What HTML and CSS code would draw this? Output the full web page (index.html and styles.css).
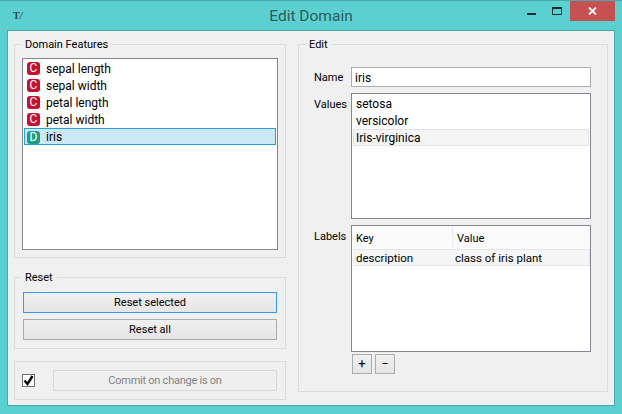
FILE: index.html
```html
<!DOCTYPE html>
<html lang="en">
<head>
    <meta charset="UTF-8">
    <meta name="viewport" content="width=device-width, initial-scale=1.0">
    <title>Edit Domain</title>
    <link rel="stylesheet" href="styles.css">
</head>
<body>
    <div class="window">
        <div class="titlebar">
            <span class="app-icon">T<i>/</i></span>
            <span class="title">Edit Domain</span>
            <div class="controls">
                <span class="ctl ctl-min"><svg width="9" height="3"><rect width="9" height="2" y="1" fill="#1c2b2b"/></svg></span>
                <span class="ctl ctl-max"><svg width="10" height="8"><path d="M.5 1.5h9v6h-9z" fill="none" stroke="#1c2b2b"/><rect width="10" height="2" fill="#1c2b2b"/></svg></span>
                <span class="ctl ctl-close"><svg width="9" height="8"><path d="M1 .5l7 7M8 .5l-7 7" fill="none" stroke="#fff" stroke-width="1.8"/></svg></span>
            </div>
        </div>
        <div class="client">
            <div class="left">
                <fieldset class="group features">
                    <legend>Domain Features</legend>
                    <ul class="list var-list">
                        <li><span class="badge cont">C</span>sepal length</li>
                        <li><span class="badge cont">C</span>sepal width</li>
                        <li><span class="badge cont">C</span>petal length</li>
                        <li><span class="badge cont">C</span>petal width</li>
                        <li class="selected"><span class="badge disc">D</span>iris</li>
                    </ul>
                </fieldset>
                <fieldset class="group reset">
                    <legend>Reset</legend>
                    <button class="btn focused">Reset selected</button>
                    <button class="btn">Reset all</button>
                </fieldset>
                <div class="group commit">
                    <span class="check"><svg width="11" height="11"><path d="M1.5 5.5l3 3.5 5-8" fill="none" stroke="#000" stroke-width="2.4"/></svg></span>
                    <button class="btn disabled">Commit on change is on</button>
                </div>
            </div>
            <fieldset class="group edit">
                <legend>Edit</legend>
                <div class="form">
                    <label class="lbl lbl-name">Name</label>
                    <input class="name-input" type="text" value="iris">
                    <label class="lbl">Values</label>
                    <ul class="list values">
                        <li>setosa</li>
                        <li>versicolor</li>
                        <li class="current">Iris-virginica</li>
                    </ul>
                    <label class="lbl">Labels</label>
                    <div class="labels-cell">
                        <div class="list table">
                            <div class="thead">
                                <span class="col-key">Key</span>
                                <span class="col-value">Value</span>
                            </div>
                            <div class="trow">
                                <span class="col-key">description</span>
                                <span class="col-value">class of iris plant</span>
                            </div>
                        </div>
                        <div class="tools">
                            <button class="btn tool">+</button>
                            <button class="btn tool">&minus;</button>
                        </div>
                    </div>
                </div>
            </fieldset>
        </div>
    </div>
</body>
</html>
```

FILE: styles.css
```css
* {
    box-sizing: border-box;
}
body {
    margin: 0;
    font-family: Roboto, sans-serif;
    font-size: 12px;
    color: #000;
}
.window {
    width: 622px;
    height: 414px;
    padding: 0 7px 8px 7px;
    background-color: #5bd0d0;
    border-top: 1px solid #4aa9a9;
    display: flex;
    flex-direction: column;
}
.titlebar {
    height: 29px;
    flex: none;
    display: flex;
    position: relative;
    justify-content: center;
}
.app-icon {
    position: absolute;
    left: 6px;
    top: 9px;
    font: bold 10px "Liberation Serif", serif;
    color: #2c4848;
}
.app-icon i {
    font-weight: bold;
}
.title {
    font-size: 15.5px;
    line-height: 30px;
    color: #2f5a5e;
}
.controls {
    position: absolute;
    right: 0;
    top: 0;
    display: flex;
}
.ctl {
    display: flex;
    align-items: center;
    justify-content: center;
    height: 20px;
    width: 26px;
}
.ctl-min {
    padding-top: 5px;
}
.ctl-close {
    width: 45px;
    background-color: #c75050;
}
.client {
    flex: 1;
    display: flex;
    gap: 12px;
    padding: 5px 6px 0 6px;
    background-color: #f0f0f0;
    border: 1px solid #4aa9a9;
}
.left {
    width: 272px;
    display: flex;
    flex-direction: column;
    gap: 11px;
}
.group {
    margin: 0;
    border: 1px solid #dcdcdc;
    min-width: 0;
}
legend {
    padding: 1px 4px 0;
    height: 16px;
    line-height: 16px;
    font-size: 11px;
}
.features {
    padding: 6px 7px 7px;
}
.features legend {
    margin-left: -1px;
}
.list {
    margin: 0;
    padding: 1px;
    list-style: none;
    background: white;
    border: 1px solid #828790;
}
.var-list {
    height: 192px;
}
.var-list li {
    height: 17px;
    line-height: 17px;
    padding: 1px 0 0 3px;
    display: flex;
    align-items: flex-start;
    white-space: nowrap;
}
.var-list li.selected {
    background-color: #cbe8f6;
    border: 1px solid #26a0da;
    padding: 0 0 0 2px;
}
.badge {
    width: 13px;
    height: 13px;
    margin: 1px 6px 0 0;
    border-radius: 3px;
    color: white;
    text-align: center;
    line-height: 13px;
}
.selected .badge {
    margin-top: 2px;
}
.cont {
    background-color: #c8102e;
}
.disc {
    background-color: #1f9d83;
}
.btn {
    display: block;
    font: inherit;
    font-size: 11px;
    color: #000;
    height: 21px;
    padding: 0;
    background: linear-gradient(#f0f0f0, #e5e5e5);
    border: 1px solid #acacac;
}
.reset {
    padding: 7px 8px 8px;
}
.reset legend {
    margin-left: -2px;
}
.reset .btn {
    width: 100%;
}
.reset .btn + .btn {
    margin-top: 6px;
}
.btn.focused {
    border-color: #3399ff;
}
.commit {
    height: 39px;
    margin-top: 1px;
    padding: 8px 8px 8px 7px;
    display: flex;
    align-items: center;
}
.check {
    width: 13px;
    height: 13px;
    margin-right: 18px;
    background: white;
    border: 1px solid #707070;
    display: flex;
}
.btn.disabled {
    flex: 1;
    letter-spacing: -0.25px;
    background: #efefef;
    border-color: #d9d9d9;
    color: #838383;
}
.edit {
    width: 310px;
    height: 356px;
    padding: 15px 16px 0 15px;
}
.edit legend {
    margin-left: -9px;
}
.form {
    display: grid;
    grid-template-columns: 37px 240px;
    row-gap: 6px;
}
.lbl {
    font-size: 11px;
    line-height: 17px;
    padding-top: 3px;
}
.lbl-name {
    line-height: 19px;
    padding-top: 1px;
}
.name-input {
    height: 20px;
    width: 100%;
    padding: 1px 3px 0;
    font: inherit;
    color: #000;
    border: 1px solid #acacac;
    outline: none;
}
.values {
    height: 126px;
}
.values li {
    height: 17px;
    line-height: 19px;
    padding-left: 3px;
}
.values li.current {
    background-color: #f5f5f5;
    border: 1px solid #e2e2e2;
    padding-left: 2px;
    line-height: 17px;
}
.labels-cell {
    display: flex;
    flex-direction: column;
    gap: 2px;
}
.table {
    height: 127px;
    padding: 0;
}
.thead, .trow {
    display: grid;
    grid-template-columns: 100px 1fr;
}
.thead {
    height: 23px;
    line-height: 25px;
    font-size: 11px;
    background-color: #fbfbfb;
}
.thead span {
    padding-left: 4px;
}
.thead .col-value {
    border-left: 1px solid #e8edf5;
}
.trow {
    height: 17px;
    line-height: 16px;
    font-size: 11.5px;
    margin-left: 1px;
    background-color: #f5f5f5;
    border: 1px solid #e2e6ea;
    border-width: 1px 1px 1px 0;
}
.trow .col-key {
    padding-left: 3px;
}
.trow .col-value {
    padding-left: 2px;
}
.tools {
    display: flex;
    gap: 3px;
    padding-left: 1px;
}
.btn.tool {
    width: 20px;
    height: 20px;
    line-height: 18px;
    font-size: 13px;
}
```
